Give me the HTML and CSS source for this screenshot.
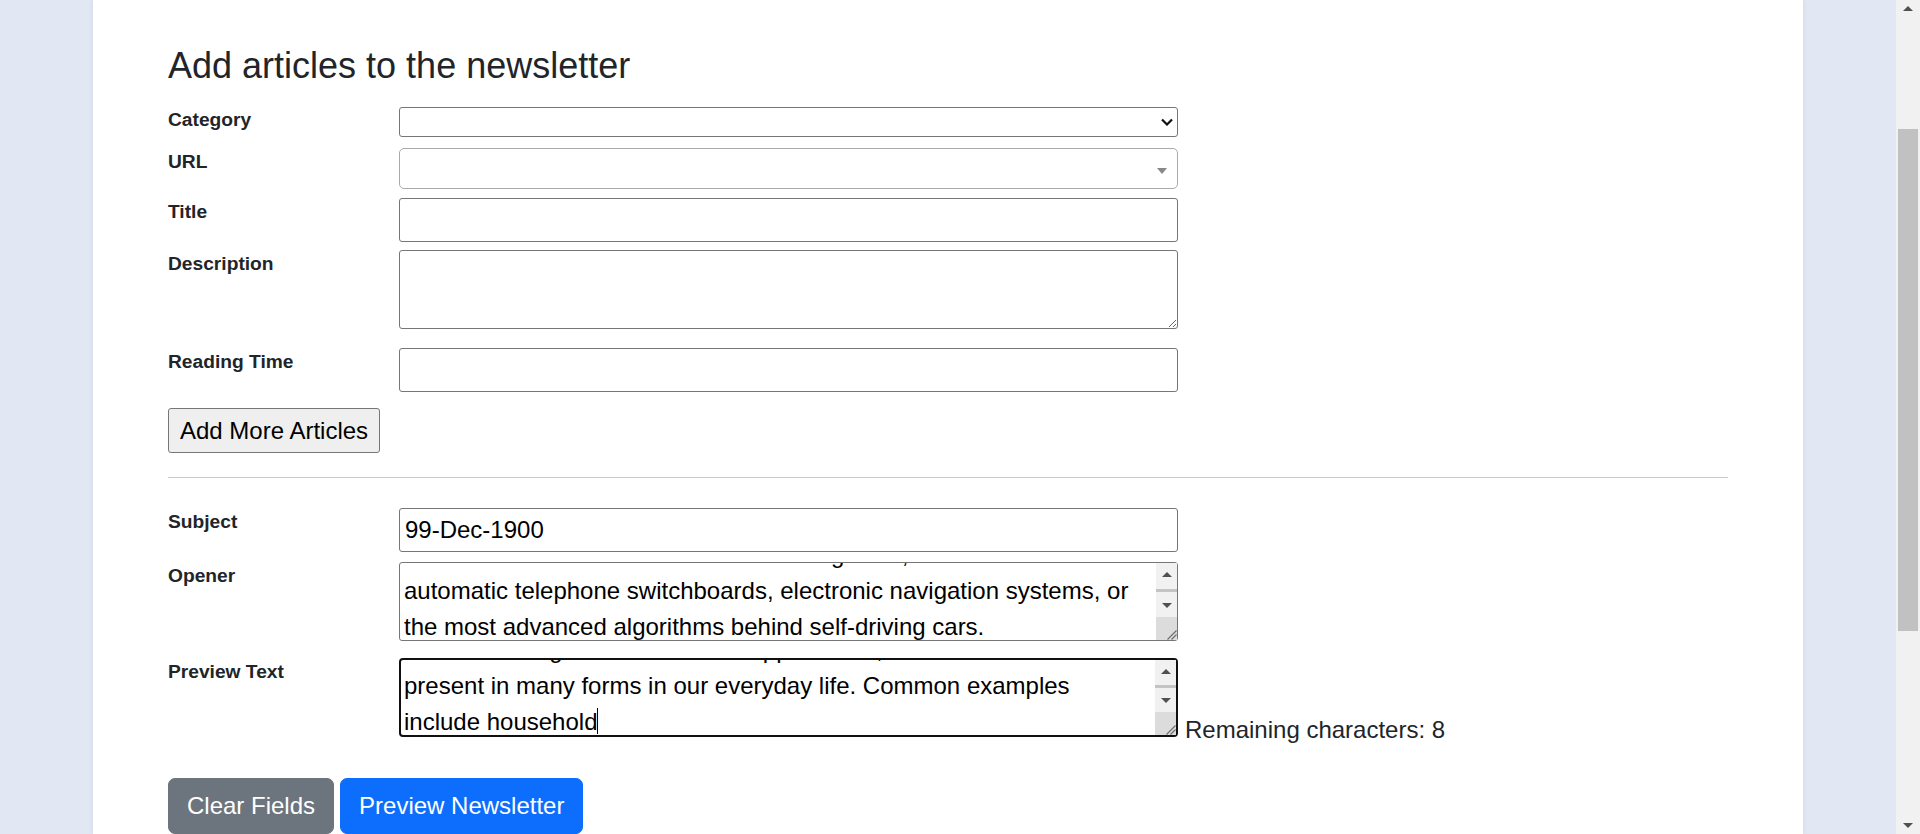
FILE: index.html
```html
<!DOCTYPE html>
<html lang="en">
<head>
<meta charset="utf-8">
<title>Newsletter</title>
<link rel="stylesheet" href="styles.css">
</head>
<body>
<div class="viewport">
  <main class="page">
    <div class="panel">
      <h2 class="title">Add articles to the newsletter</h2>
      <form class="form">
        <div class="row row-category">
          <label class="lbl">Category</label>
          <div class="ctl select-wrap">
            <select class="select"><option></option></select>
            <svg class="chev" width="12" height="8" viewBox="0 0 12 8"><path d="M1 1.5 L6 6.5 L11 1.5" fill="none" stroke="#111" stroke-width="2.2"/></svg>
          </div>
        </div>
        <div class="row row-url">
          <label class="lbl">URL</label>
          <div class="ctl combo">
            <span class="combo-arrow"></span>
          </div>
        </div>
        <div class="row row-title">
          <label class="lbl">Title</label>
          <div class="ctl"><input class="input" type="text"></div>
        </div>
        <div class="row row-desc">
          <label class="lbl">Description</label>
          <div class="ctl"><textarea class="area"></textarea></div>
        </div>
        <div class="row row-time">
          <label class="lbl">Reading Time</label>
          <div class="ctl"><input class="input" type="text"></div>
        </div>
        <div class="add-row">
          <button type="button" class="btn-plain">Add More Articles</button>
        </div>
        <hr class="sep">
        <div class="row row-subject">
          <label class="lbl">Subject</label>
          <div class="ctl"><input class="input" type="text" value="99-Dec-1900"></div>
        </div>
        <div class="row row-opener">
          <label class="lbl">Opener</label>
          <div class="ctl">
            <div class="area-wrap">
              <textarea class="area has-bar scroll-end">Artificial intelligence is already part of our everyday lives,
from online translation and home banking tools,
automatic telephone switchboards, electronic navigation systems, or
the most advanced algorithms behind self-driving cars.</textarea>
              <div class="vbar" aria-hidden="true">
                <div class="vbar-btn"><span class="arr-up"></span></div>
                <div class="vbar-track"><div class="vbar-thumb"></div></div>
                <div class="vbar-btn"><span class="arr-down"></span></div>
                <div class="vbar-corner"><svg class="grip" width="11" height="11" viewBox="0 0 11 11"><path d="M1.5 10.5 L10.5 1.5 M5.5 10.5 L10.5 5.5" stroke="#6b6b6b" stroke-width="1.1" fill="none"/></svg></div>
              </div>
            </div>
          </div>
        </div>
        <div class="row row-preview">
          <label class="lbl">Preview Text</label>
          <div class="ctl with-count">
            <div class="area-wrap">
              <textarea class="area has-bar focused scroll-end">Artificial intelligence and its new applications, which are now
present in many forms in our everyday life. Common examples
include household</textarea>
              <div class="vbar vbar-focused" aria-hidden="true">
                <div class="vbar-btn"><span class="arr-up"></span></div>
                <div class="vbar-track"><div class="vbar-thumb"></div></div>
                <div class="vbar-btn"><span class="arr-down"></span></div>
                <div class="vbar-corner"><svg class="grip" width="11" height="11" viewBox="0 0 11 11"><path d="M1.5 10.5 L10.5 1.5 M5.5 10.5 L10.5 5.5" stroke="#6b6b6b" stroke-width="1.1" fill="none"/></svg></div>
              </div>
              <span class="caret"></span>
            </div>
            <span class="count">Remaining characters: 8</span>
          </div>
        </div>
        <div class="actions">
          <button type="button" class="btn btn-secondary">Clear Fields</button>
          <button type="button" class="btn btn-primary">Preview Newsletter</button>
        </div>
      </form>
    </div>
  </main>
  <div class="scrollbar" aria-hidden="true">
    <div class="sb-btn"><span class="tri-up"></span></div>
    <div class="sb-track"><div class="sb-thumb"></div></div>
    <div class="sb-btn"><span class="tri-down"></span></div>
  </div>
</div>
<script src="script.js"></script>
</body>
</html>
```
FILE: styles.css
```css
html, body {
  margin: 0;
  padding: 0;
  height: 834px;
  overflow: hidden;
}
body {
  background: #e2e8f3;
  font-family: "Liberation Sans", Arial, sans-serif;
  color: #212529;
}
.viewport {
  display: flex;
  height: 834px;
}
.page {
  flex: 1;
  display: flex;
  justify-content: center;
  overflow: hidden;
}
.panel {
  width: 1710px;
  box-sizing: border-box;
  background: #fff;
  padding: 44px 75px 0;
  box-shadow: 0 0 5px rgba(60, 80, 140, 0.12);
}
.title {
  margin: 0;
  font-size: 36px;
  line-height: 43px;
  font-weight: 400;
  color: #212529;
}
.form {
  margin-top: 20px;
  width: 1560px;
}
.row {
  display: grid;
  grid-template-columns: 231px 779px;
  align-items: start;
}
.lbl {
  font-size: 19.2px;
  line-height: 26px;
  padding-top: 1px;
  font-weight: 700;
  color: #212529;
}
.row-category .lbl { padding-top: 0; }
.ctl {
  position: relative;
}
.row-category { margin-bottom: 11px; }
.row-url { margin-bottom: 9px; }
.row-title { margin-bottom: 8px; }
.row-desc { margin-bottom: 19px; }
.row-time { margin-bottom: 16px; }
.row-subject { margin-bottom: 10px; }
.row-opener { margin-bottom: 17px; }
.row-preview { margin-bottom: 41px; }

.select {
  display: block;
  width: 100%;
  height: 30px;
  box-sizing: border-box;
  border: 1px solid #767676;
  border-radius: 3px;
  background: #fff;
  -webkit-appearance: none;
  appearance: none;
  font-family: "Liberation Sans", Arial, sans-serif;
  font-size: 16px;
  margin: 0;
}
.chev {
  position: absolute;
  right: 5px;
  top: 11px;
  pointer-events: none;
}
.combo {
  height: 41px;
  box-sizing: border-box;
  border: 1px solid #aaa;
  border-radius: 5px;
  background: #fff;
}
.combo-arrow {
  position: absolute;
  right: 10px;
  top: 19px;
  width: 0;
  height: 0;
  border-style: solid;
  border-width: 6px 5.5px 0 5.5px;
  border-color: #888 transparent transparent transparent;
}
.input {
  display: block;
  width: 100%;
  height: 44px;
  box-sizing: border-box;
  border: 1px solid #767676;
  border-radius: 3px;
  padding: 0 5px;
  margin: 0;
  font-family: "Liberation Sans", Arial, sans-serif;
  font-size: 24px;
  color: #000;
  background: #fff;
}
.area {
  display: block;
  width: 779px;
  height: 79px;
  box-sizing: border-box;
  border: 1px solid #767676;
  border-radius: 3px;
  padding: 0 4px;
  margin: 0;
  font-family: "Liberation Sans", Arial, sans-serif;
  font-size: 24px;
  line-height: 36px;
  color: #000;
  background: #fff;
  resize: both;
}
.area.has-bar {
  resize: none;
  padding-right: 25px;
  overflow: hidden;
  white-space: pre;
}
.area.focused {
  border: 2px solid #101010;
  border-radius: 4px;
  padding-left: 3px;
  outline: none;
}
.area-wrap {
  position: relative;
  width: 779px;
  flex: none;
}
.vbar {
  position: absolute;
  top: 1px;
  right: 1px;
  bottom: 1px;
  width: 21px;
  display: flex;
  flex-direction: column;
  background: #f1f1f1;
}
.vbar.vbar-focused {
  top: 2px;
  right: 2px;
  bottom: 2px;
}
.vbar-btn {
  height: 23px;
  flex: none;
  display: flex;
  align-items: center;
  justify-content: center;
}
.arr-up, .arr-down {
  width: 0;
  height: 0;
  border-style: solid;
}
.arr-up {
  border-width: 0 5px 5.5px 5px;
  border-color: transparent transparent #505050 transparent;
}
.arr-down {
  border-width: 5.5px 5px 0 5px;
  border-color: #505050 transparent transparent transparent;
}
.vbar-track {
  flex: 1;
  display: flex;
  flex-direction: column;
  justify-content: center;
}
.vbar-thumb {
  height: 3px;
  background: #c4c4c4;
}
.vbar-corner {
  height: 23px;
  flex: none;
  background: #dcdcdc;
  display: flex;
  align-items: flex-end;
  justify-content: flex-end;
}
.grip {
  display: block;
}
.caret {
  position: absolute;
  left: 198px;
  top: 50px;
  width: 1px;
  height: 26px;
  background: #000;
}
.with-count {
  display: flex;
  align-items: flex-end;
  width: 1100px;
}
.count {
  flex: none;
  font-size: 24px;
  line-height: 24px;
  margin-left: 7px;
  margin-bottom: -5px;
  color: #212529;
}
.add-row {
  display: flex;
}
.btn-plain {
  height: 45px;
  box-sizing: border-box;
  padding: 0 11px;
  font-family: "Liberation Sans", Arial, sans-serif;
  font-size: 24px;
  color: #000;
  background: #efefef;
  border: 1px solid #767676;
  border-radius: 3px;
  margin: 0;
}
.sep {
  margin: 24px 0 30px;
  border: 0;
  border-top: 1px solid #c8c9ca;
  height: 0;
}
.actions {
  display: flex;
  gap: 6px;
}
.btn {
  height: 56px;
  box-sizing: border-box;
  padding: 0 18px;
  border: 1px solid transparent;
  border-radius: 7px;
  font-family: "Liberation Sans", Arial, sans-serif;
  font-size: 24px;
  color: #fff;
  margin: 0;
}
.btn-secondary { background: #6c757d; border-color: #6c757d; }
.btn-primary { background: #0d6efd; border-color: #0d6efd; }

.scrollbar {
  width: 24px;
  flex: none;
  background: #f1f1f1;
  display: flex;
  flex-direction: column;
}
.sb-btn {
  height: 17px;
  display: flex;
  align-items: center;
  justify-content: center;
}
.tri-up, .tri-down {
  width: 0;
  height: 0;
  border-style: solid;
}
.tri-up {
  border-width: 0 5px 5px 5px;
  border-color: transparent transparent #505050 transparent;
}
.tri-down {
  border-width: 5px 5px 0 5px;
  border-color: #505050 transparent transparent transparent;
}
.sb-track {
  flex: 1;
  padding: 0 2px;
}
.sb-thumb {
  margin-top: 112px;
  height: 502px;
  background: #c1c1c1;
}
```
FILE: script.js
```js
document.querySelectorAll('.scroll-end').forEach(function (el) {
  el.scrollTop = Math.max(0, el.scrollHeight - el.clientHeight - 5);
});
```
